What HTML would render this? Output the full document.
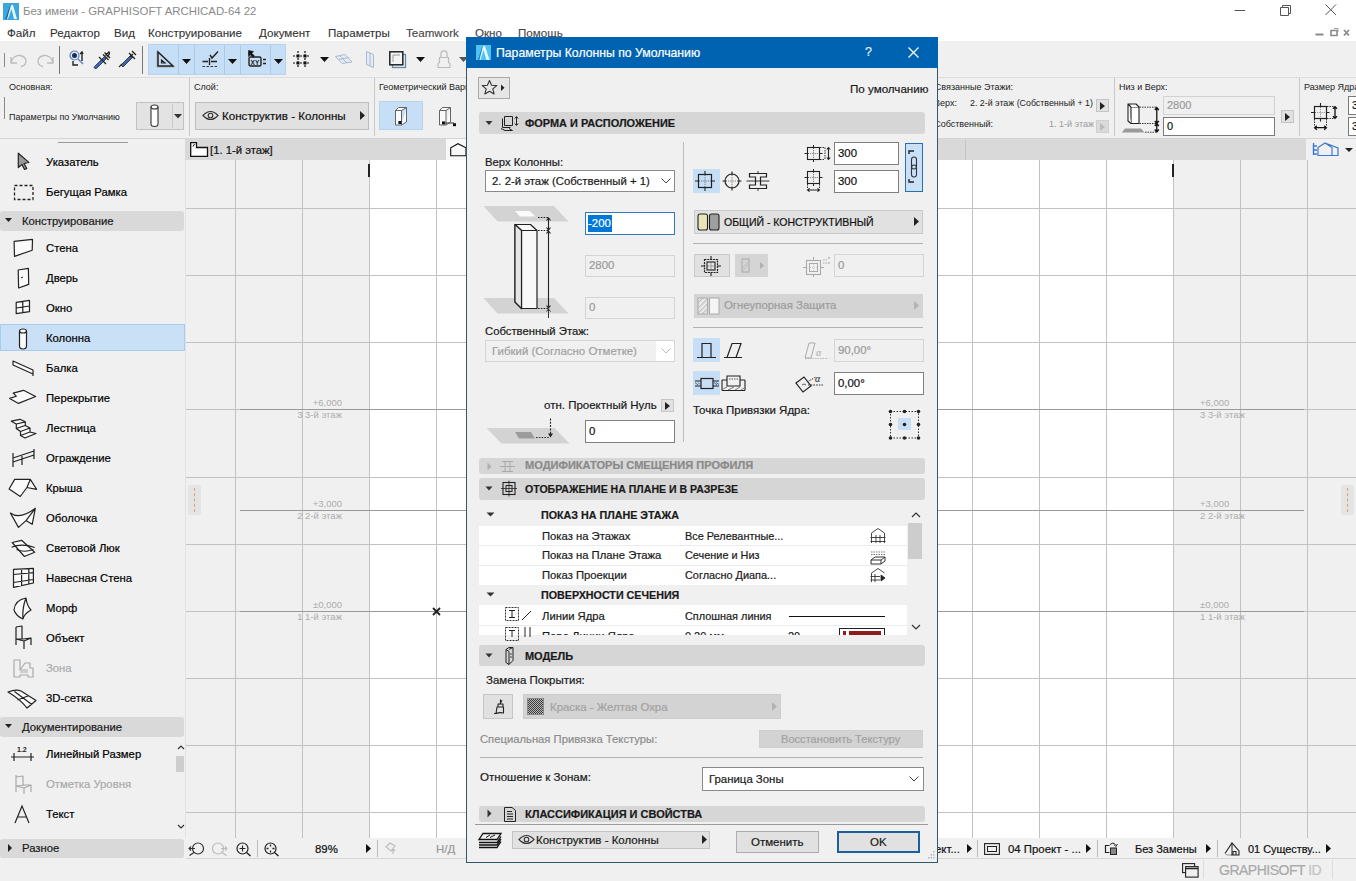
<!DOCTYPE html>
<html><head><meta charset="utf-8">
<style>
*{box-sizing:border-box;margin:0;padding:0}
html,body{width:1356px;height:881px;overflow:hidden;background:#f0f0f0;font-family:"Liberation Sans",sans-serif;color:#000;position:relative}
.a{position:absolute}
.t{position:absolute;white-space:nowrap;line-height:1;-webkit-text-stroke:0.2px currentColor}
svg{position:absolute;overflow:visible}
.ib{font-size:9px;color:#222;-webkit-text-stroke:0}
.tb{font-size:11.3px;color:#1a1a1a}
.dl{font-size:11.4px;color:#1a1a1a}
.hd{font-weight:bold;font-size:10.9px;color:#1a1a1a}
</style></head><body>
<div class="a" style="left:186px;top:160px;width:1170px;height:678px;background:#fff"></div>
<div class="a" style="left:186px;top:160px;width:183px;height:678px;background:#f0f0f0"></div>
<div class="a" style="left:1173px;top:160px;width:183px;height:678px;background:#f0f0f0"></div>
<div class="a" style="left:235px;top:160px;width:1px;height:678px;background:#c2c2c2"></div>
<div class="a" style="left:302px;top:160px;width:1px;height:678px;background:#c2c2c2"></div>
<div class="a" style="left:369px;top:160px;width:1px;height:678px;background:#c2c2c2"></div>
<div class="a" style="left:436px;top:160px;width:1px;height:678px;background:#c2c2c2"></div>
<div class="a" style="left:503px;top:160px;width:1px;height:678px;background:#c2c2c2"></div>
<div class="a" style="left:570px;top:160px;width:1px;height:678px;background:#c2c2c2"></div>
<div class="a" style="left:637px;top:160px;width:1px;height:678px;background:#c2c2c2"></div>
<div class="a" style="left:704px;top:160px;width:1px;height:678px;background:#c2c2c2"></div>
<div class="a" style="left:771px;top:160px;width:1px;height:678px;background:#c2c2c2"></div>
<div class="a" style="left:838px;top:160px;width:1px;height:678px;background:#c2c2c2"></div>
<div class="a" style="left:905px;top:160px;width:1px;height:678px;background:#c2c2c2"></div>
<div class="a" style="left:972px;top:160px;width:1px;height:678px;background:#c2c2c2"></div>
<div class="a" style="left:1039px;top:160px;width:1px;height:678px;background:#c2c2c2"></div>
<div class="a" style="left:1106px;top:160px;width:1px;height:678px;background:#c2c2c2"></div>
<div class="a" style="left:1173px;top:160px;width:1px;height:678px;background:#c2c2c2"></div>
<div class="a" style="left:1240px;top:160px;width:1px;height:678px;background:#c2c2c2"></div>
<div class="a" style="left:1307px;top:160px;width:1px;height:678px;background:#c2c2c2"></div>
<div class="a" style="left:186px;top:208px;width:1170px;height:1px;background:#c2c2c2"></div>
<div class="a" style="left:186px;top:275px;width:1170px;height:1px;background:#c2c2c2"></div>
<div class="a" style="left:186px;top:342px;width:1170px;height:1px;background:#c2c2c2"></div>
<div class="a" style="left:186px;top:409px;width:1170px;height:1px;background:#c2c2c2"></div>
<div class="a" style="left:186px;top:477px;width:1170px;height:1px;background:#c2c2c2"></div>
<div class="a" style="left:186px;top:544px;width:1170px;height:1px;background:#c2c2c2"></div>
<div class="a" style="left:186px;top:611px;width:1170px;height:1px;background:#c2c2c2"></div>
<div class="a" style="left:186px;top:678px;width:1170px;height:1px;background:#c2c2c2"></div>
<div class="a" style="left:186px;top:745px;width:1170px;height:1px;background:#c2c2c2"></div>
<div class="a" style="left:186px;top:812px;width:1170px;height:1px;background:#c2c2c2"></div>
<div class="a" style="left:240px;top:409px;width:1064px;height:1px;background:#9a9a9a"></div>
<div class="t" style="right:1014px;top:398px;font-size:9.5px;color:#acacac;-webkit-text-stroke:0">+6,000</div>
<div class="t" style="right:1014px;top:410px;font-size:9.5px;color:#acacac;-webkit-text-stroke:0">3 3-й этаж</div>
<div class="t" style="left:1200px;top:398px;font-size:9.5px;color:#acacac;-webkit-text-stroke:0">+6,000</div>
<div class="t" style="left:1200px;top:410px;font-size:9.5px;color:#acacac;-webkit-text-stroke:0">3 3-й этаж</div>
<div class="a" style="left:240px;top:510px;width:1064px;height:1px;background:#9a9a9a"></div>
<div class="t" style="right:1014px;top:499px;font-size:9.5px;color:#acacac;-webkit-text-stroke:0">+3,000</div>
<div class="t" style="right:1014px;top:511px;font-size:9.5px;color:#acacac;-webkit-text-stroke:0">2 2-й этаж</div>
<div class="t" style="left:1200px;top:499px;font-size:9.5px;color:#acacac;-webkit-text-stroke:0">+3,000</div>
<div class="t" style="left:1200px;top:511px;font-size:9.5px;color:#acacac;-webkit-text-stroke:0">2 2-й этаж</div>
<div class="a" style="left:240px;top:611px;width:1064px;height:1px;background:#9a9a9a"></div>
<div class="t" style="right:1014px;top:600px;font-size:9.5px;color:#acacac;-webkit-text-stroke:0">±0,000</div>
<div class="t" style="right:1014px;top:612px;font-size:9.5px;color:#acacac;-webkit-text-stroke:0">1 1-й этаж</div>
<div class="t" style="left:1200px;top:600px;font-size:9.5px;color:#acacac;-webkit-text-stroke:0">±0,000</div>
<div class="t" style="left:1200px;top:612px;font-size:9.5px;color:#acacac;-webkit-text-stroke:0">1 1-й этаж</div>
<div class="a" style="left:368px;top:164px;width:2px;height:13px;background:#222"></div>
<div class="a" style="left:1172px;top:164px;width:2px;height:13px;background:#222"></div>
<svg style="left:432px;top:607px" width="9" height="9"><path d="M1 1L8 8M8 1L1 8" stroke="#222" stroke-width="1.8"/></svg>
<div class="a" style="left:188px;top:485px;width:13px;height:30px;background:#e4e4e4;border-radius:2px"></div>
<div class="a" style="left:194px;top:488px;width:0;height:24px;border-left:1px dashed #d9a070"></div>
<div class="a" style="left:1341px;top:485px;width:13px;height:30px;background:#e4e4e4;border-radius:2px"></div>
<div class="a" style="left:1347px;top:488px;width:0;height:24px;border-left:1px dashed #d9a070"></div>
<div class="a" style="left:0;top:139px;width:186px;height:720px;background:#f0f0f0"></div>
<div class="a" style="left:58px;top:142px;width:70px;height:1px;background:#9a9a9a"></div>
<div class="a" style="left:185px;top:139px;width:1px;height:699px;background:#e2e2e2"></div>
<div class="t tb" style="left:46px;top:157px;color:#000">Указатель</div>
<div class="t tb" style="left:46px;top:187px;color:#000">Бегущая Рамка</div>
<div class="a" style="left:0;top:211.0px;width:184px;height:19.5px;background:#d9d9d9;border-radius:3px"></div>
<div class="t tb" style="left:22px;top:215.5px">Конструирование</div>
<div class="t tb" style="left:46px;top:243px;color:#000">Стена</div>
<div class="t tb" style="left:46px;top:273px;color:#000">Дверь</div>
<div class="t tb" style="left:46px;top:303px;color:#000">Окно</div>
<div class="a" style="left:0;top:324px;width:185px;height:27px;background:#c9e0f7;border:1px solid #a6cdee"></div>
<div class="t tb" style="left:46px;top:333px;color:#000">Колонна</div>
<div class="t tb" style="left:46px;top:363px;color:#000">Балка</div>
<div class="t tb" style="left:46px;top:393px;color:#000">Перекрытие</div>
<div class="t tb" style="left:46px;top:423px;color:#000">Лестница</div>
<div class="t tb" style="left:46px;top:453px;color:#000">Ограждение</div>
<div class="t tb" style="left:46px;top:483px;color:#000">Крыша</div>
<div class="t tb" style="left:46px;top:513px;color:#000">Оболочка</div>
<div class="t tb" style="left:46px;top:543px;color:#000">Световой Люк</div>
<div class="t tb" style="left:46px;top:573px;color:#000">Навесная Стена</div>
<div class="t tb" style="left:46px;top:603px;color:#000">Морф</div>
<div class="t tb" style="left:46px;top:633px;color:#000">Объект</div>
<div class="t tb" style="left:46px;top:663px;color:#aaa">Зона</div>
<div class="t tb" style="left:46px;top:693px;color:#000">3D-сетка</div>
<div class="a" style="left:0;top:717.0px;width:184px;height:19.5px;background:#d9d9d9;border-radius:3px"></div>
<div class="t tb" style="left:22px;top:721.5px">Документирование</div>
<div class="t tb" style="left:46px;top:749px;color:#000">Линейный Размер</div>
<div class="t tb" style="left:46px;top:779px;color:#aaa">Отметка Уровня</div>
<div class="t tb" style="left:46px;top:809px;color:#000">Текст</div>
<div class="a" style="left:0;top:838.5px;width:184px;height:19.5px;background:#d9d9d9;border-radius:3px"></div>
<div class="t tb" style="left:22px;top:843px">Разное</div>
<div class="a" style="left:176px;top:756px;width:8px;height:16px;background:#cdcdcd"></div>
<svg style="left:0;top:0" width="186" height="881">
<path d="M18.3 153.2L28.9 162.4L24 163.5L26.8 168.5L24.5 169.5L22 164.5L18.3 167.5Z" fill="#999" stroke="#222" stroke-width="1.2" stroke-linejoin="round"/>
<rect x="14.5" y="185.5" width="18.5" height="14" fill="none" stroke="#222" stroke-width="1.3" stroke-dasharray="3 2"/>
<path d="M5 218.0H12L8.5 222.0Z" fill="#222"/>
<path d="M14.1 241.4L32.5 239.4L32.2 250.3L14.5 256.4Z" fill="#fafafa" stroke="#222" stroke-width="1.2" fill="none" stroke-linejoin="round"/>
<path d="M18.2 270L28.4 268.4L28.7 284.4L18.6 288Z" fill="#fafafa" stroke="#222" stroke-width="1.2" fill="none" stroke-linejoin="round"/><path d="M21 278L23 277" stroke="#222"/>
<path d="M16.2 302.4L29.5 300.4L29.5 311.7L16.2 313.7Z M22.8 301.4V312.7 M16.2 308L29.5 306" fill="#fafafa" stroke="#222" stroke-width="1.2" fill="none" stroke-linejoin="round"/>
<path d="M19.5 331V346Q19.5 349 23 349Q26.5 349 26.5 346V331" fill="#fafafa" stroke="#222" stroke-width="1.2" fill="none" stroke-linejoin="round"/><ellipse cx="23" cy="331" rx="3.5" ry="2" fill="#fafafa" stroke="#222" stroke-width="1.2" fill="none" stroke-linejoin="round"/>
<path d="M13 361L33 370L33 374L13 365Z M13 361V365 M33 370V376" fill="#fafafa" stroke="#222" stroke-width="1.2" fill="none" stroke-linejoin="round"/>
<path d="M9.7 398.4L16.3 396.2L13.2 393.1L23.5 390.3L35.6 396.5L18.5 403.4Z" fill="#fafafa" stroke="#222" stroke-width="1.2" fill="none" stroke-linejoin="round"/>
<path d="M11.3 421.2L20 419.3L25.3 421.8L16.3 424Z M16.3 424V428.5L25.3 425.5V421.8 M16.3 428.5L20.5 431.5L30 428L25.3 425.5 M20.5 431.5V435.5L30 432V428 M20.5 435.5L25 438L36 433.5L30 432" fill="#fafafa" stroke="#222" stroke-width="1.2" fill="none" stroke-linejoin="round"/>
<path d="M13 467V453 M13 458L34 451 M13 462L34 455 M22 465V456 M34 459V449" stroke="#222" stroke-width="1.2" fill="none" stroke-linejoin="round"/>
<path d="M9.1 489L14.7 479.4H30.3L36.6 489.3L26.9 487.5L20.3 496.5Z M30.3 479.4L26.9 487.5" fill="#fafafa" stroke="#222" stroke-width="1.2" fill="none" stroke-linejoin="round"/>
<path d="M10.4 513Q20 520 35.3 508.3L32.2 524.3L26 520.6L18.5 527.4Z M35.3 508.3L26 520.6" fill="#fafafa" stroke="#222" stroke-width="1.2" fill="none" stroke-linejoin="round"/>
<path d="M12.2 542.5L21.6 540.3L34.7 552.2L24.4 556.5Z" fill="#fafafa" stroke="#222" stroke-width="1.2" fill="none" stroke-linejoin="round"/><path d="M11.6 547.2Q22 543 34.7 547.5 M16.5 549.5Q24 553 33.5 549.5" fill="none" stroke="#222" stroke-width="1.2" fill="none" stroke-linejoin="round"/>
<path d="M13.5 569.3L33.4 568.4V583L13.5 587.4Z M13.5 574.5L33.4 572.6 M13.5 582.5L33.4 579.5 M21.6 569V586 M28.8 568.6V584.2" fill="#fafafa" stroke="#222" stroke-width="1.2" fill="none" stroke-linejoin="round"/>
<path d="M14 610Q15 600 26 598Q27 606 31 610Q24 614 23 619Q16 616 14 610Z M26 598Q22 608 23 619" fill="#fafafa" stroke="#222" stroke-width="1.2" fill="none" stroke-linejoin="round"/>
<path d="M16 627V645 M16 627L22 626V639 M16 639L23 639L31 638L24 641Z M24 641V649 M31 638V645" fill="none" stroke="#222" stroke-width="1.2" fill="none" stroke-linejoin="round"/>
<path d="M14 660H20V670L25 663H30V668H33V677H28V675H20V677H14Z M20 670H28M20 672H28" stroke="#aaa" stroke-width="1.2" fill="none" stroke-linejoin="round"/>
<path d="M8 692Q16 689 21 691L36 700.5L27 708Q20 699 8 692Z M14.5 691.5L31.5 704.3 M28.5 695.7L17.5 700" fill="#fafafa" stroke="#222" stroke-width="1.2" fill="none" stroke-linejoin="round"/>
<path d="M5 724.0H12L8.5 728.0Z" fill="#222"/>
<path d="M11 757H34 M14 753V761 M31 753V761" stroke="#222" stroke-width="1.2"/><text x="17" y="752" font-size="7" font-weight="bold" font-family="Liberation Sans" fill="#222">1.2</text>
<path d="M16 775V792 M16 777L23 776V786 M16 786L25 785L31 785L24 788Z M24 788V794 M31 785V792" fill="none" stroke="#aaa" stroke-width="1.2" fill="none" stroke-linejoin="round"/>
<path d="M15 823L22 806L29 823 M18 817H26" stroke="#222" stroke-width="1.2" fill="none"/>
<path d="M8 844V852L12 848Z" fill="#222"/>
<path d="M178 749L181 746L184 749" stroke="#333" stroke-width="1.2" fill="none"/>
<path d="M178 825L181 828L184 825" stroke="#333" stroke-width="1.2" fill="none"/>
</svg>
<!-- title + menu -->
<div class="a" style="left:0;top:0;width:1356px;height:41px;background:#fff"></div>
<svg style="left:3px;top:3px" width="16" height="17"><rect x="0" y="0" width="16" height="17" fill="#3aa7dd"/><path d="M2 16 L7 2 L10 2 L14 16 L11 16 L8.5 6 L5 16Z" fill="#e6f6ff"/><path d="M2 16 L7 2 L8 2 L4 16Z" fill="#0e6aa8"/></svg>
<div class="t" style="left:23px;top:6px;font-size:11.4px;color:#8a8a8a;-webkit-text-stroke:0">Без имени - GRAPHISOFT ARCHICAD-64 22</div>
<svg style="left:1234px;top:4px" width="12" height="12"><path d="M0.5 6.5H11" stroke="#555" stroke-width="1"/></svg>
<svg style="left:1280px;top:4px" width="12" height="12"><path d="M0.5 3.5H8.5V11.5H0.5Z M2.5 3.5V1.5H10.5V9.5H8.5" stroke="#555" stroke-width="1" fill="none"/></svg>
<svg style="left:1325px;top:4px" width="12" height="12"><path d="M0.5 0.5L11 11M11 0.5L0.5 11" stroke="#555" stroke-width="1"/></svg>
<div class="t" style="left:7px;top:27px;font-size:11.6px;color:#333;-webkit-text-stroke:0.1px #333">Файл</div>
<div class="t" style="left:50px;top:27px;font-size:11.6px;color:#333;-webkit-text-stroke:0.1px #333">Редактор</div>
<div class="t" style="left:114px;top:27px;font-size:11.6px;color:#333;-webkit-text-stroke:0.1px #333">Вид</div>
<div class="t" style="left:148px;top:27px;font-size:11.6px;color:#333;-webkit-text-stroke:0.1px #333">Конструирование</div>
<div class="t" style="left:259px;top:27px;font-size:11.6px;color:#333;-webkit-text-stroke:0.1px #333">Документ</div>
<div class="t" style="left:328px;top:27px;font-size:11.6px;color:#333;-webkit-text-stroke:0.1px #333">Параметры</div>
<div class="t" style="left:406px;top:27px;font-size:11.6px;color:#444;-webkit-text-stroke:0.1px #444">Teamwork</div>
<div class="t" style="left:475px;top:27px;font-size:11.6px;color:#444;-webkit-text-stroke:0.1px #444">Окно</div>
<div class="t" style="left:518px;top:27px;font-size:11.6px;color:#444;-webkit-text-stroke:0.1px #444">Помощь</div>
<svg style="left:1312px;top:27px" width="42" height="12"><path d="M3.5 7.5H11.5" stroke="#8a8a8a" stroke-width="2"/><path d="M19 3.5H25V8.5H19Z" stroke="#8a8a8a" stroke-width="1.6" fill="none"/><path d="M22 1.5H26V5" stroke="#8a8a8a" stroke-width="0.8" fill="none"/><path d="M32 3L37 8.5M37 3L32 8.5" stroke="#8a8a8a" stroke-width="1.8"/></svg>

<!-- toolbar -->
<div class="a" style="left:0;top:41px;width:1356px;height:36px;background:#f0f0f0"></div>
<div class="a" style="left:4px;top:53px;width:1px;height:14px;background:#888"></div>
<svg style="left:10px;top:54px" width="44" height="13"><path d="M1 8 Q4 1 10 1.5 Q16 2.5 16 7.5 Q15.5 12 11 12.5" stroke="#bbb" stroke-width="1.3" fill="none"/><path d="M1 3V9H7" stroke="#bbb" stroke-width="1.3" fill="none"/><path d="M43 8 Q40 1 34 1.5 Q28 2.5 28 7.5 Q28.5 12 33 12.5" stroke="#bbb" stroke-width="1.3" fill="none"/><path d="M43 3V9H37" stroke="#bbb" stroke-width="1.3" fill="none"/></svg>
<div class="a" style="left:59px;top:46px;width:1px;height:28px;background:#777"></div>
<svg style="left:69px;top:50px" width="18" height="18"><circle cx="5.5" cy="5.5" r="4.5" fill="#dbe8f5" stroke="#5b7fbf" stroke-width="1.2"/><circle cx="5.5" cy="5.5" r="2.5" fill="#1e2d4a"/><path d="M9 9L14 14" stroke="#5b7fbf" stroke-width="1.3"/><path d="M13 11V3 M11 4L13 2L14 4" stroke="#222" stroke-width="1.4" fill="none"/><path d="M4 11V15H9" stroke="#222" stroke-width="1.4" fill="none"/></svg>
<svg style="left:92px;top:50px" width="20" height="19"><path d="M2.5 16.5L12 7L14 9L4.5 18.5Q2.5 19 2 17.5Z" fill="#4366b4" stroke="#1e2f55" stroke-width="0.8"/><path d="M11 4.5L16.5 10 M12.5 2.5L18 8 M13.5 5.5L17 2Q18.5 3.5 15 7" stroke="#222" stroke-width="1.3" fill="none"/><path d="M7 7L14 14" stroke="#222" stroke-width="1.2"/></svg>
<svg style="left:118px;top:50px" width="18" height="18"><path d="M1 17 L4 14" stroke="#333" stroke-width="1.2"/><path d="M3 15 L13 5 L15 7 L5 17Z" fill="#4065b0" stroke="#222" stroke-width="0.8"/><path d="M11 3L17 9 M14 1L18 5 M12 7L15 4" stroke="#222" stroke-width="1.3"/></svg>
<div class="a" style="left:142px;top:46px;width:1px;height:28px;background:#777"></div>
<div class="a" style="left:148px;top:44px;width:138px;height:31px;background:#c6dff6;border:1px solid #b3d3f0"></div>
<div class="a" style="left:178px;top:45px;width:1px;height:29px;background:#a9cbe9"></div>
<div class="a" style="left:194px;top:45px;width:1px;height:29px;background:#a9cbe9"></div>
<div class="a" style="left:224px;top:45px;width:1px;height:29px;background:#a9cbe9"></div>
<div class="a" style="left:240px;top:45px;width:1px;height:29px;background:#a9cbe9"></div>
<div class="a" style="left:270px;top:45px;width:1px;height:29px;background:#a9cbe9"></div>
<svg style="left:155px;top:50px" width="20" height="20"><path d="M2 1V17H19" stroke="#999" stroke-width="0.8" fill="none"/><path d="M3 2V16H18Z" stroke="#222" stroke-width="1.5" fill="none" stroke-linejoin="miter"/><path d="M6.5 10V13H10Z" stroke="#222" stroke-width="1.2" fill="none"/></svg>
<svg style="left:182px;top:59px" width="9" height="5"><path d="M0 0H9L4.5 5Z" fill="#111"/></svg>
<svg style="left:202px;top:50px" width="18" height="18"><path d="M0.5 11.5H6 M9 11.5H15" stroke="#222" stroke-width="1.4"/><path d="M7.5 8V15" stroke="#222" stroke-width="1.4"/><path d="M8 5L10 8L16 1.5" stroke="#222" stroke-width="1.4" fill="none"/><path d="M0.5 16.5H16" stroke="#333" stroke-width="1" stroke-dasharray="2.5 1.5"/></svg>
<svg style="left:228px;top:59px" width="9" height="5"><path d="M0 0H9L4.5 5Z" fill="#111"/></svg>
<svg style="left:248px;top:50px" width="19" height="18"><path d="M0.5 0.5V6.5L2.3 4.8L5 7.5L6.5 6L3.8 3.3L5.5 1.5Z" fill="#111" stroke="#111" stroke-width="0.6" stroke-linejoin="round"/><rect x="1" y="7" width="12" height="9" rx="1.5" fill="none" stroke="#222" stroke-width="1.4"/><text x="2.6" y="14.5" font-size="6.5" font-weight="bold" font-family="Liberation Sans" fill="#222">XY</text><path d="M15 9.5H18M15 13.5H18" stroke="#222" stroke-width="1.3"/></svg>
<svg style="left:274px;top:59px" width="9" height="5"><path d="M0 0H9L4.5 5Z" fill="#111"/></svg>
<svg style="left:293px;top:51px" width="18" height="18"><path d="M0 5H17M0 12H17M5 0V17M12 0V17" stroke="#111" stroke-width="1.2" stroke-dasharray="2 1.5"/><rect x="3.5" y="3.5" width="3" height="3" fill="#111"/><rect x="10.5" y="3.5" width="3" height="3" fill="#111"/><rect x="3.5" y="10.5" width="3" height="3" fill="#111"/><rect x="10.5" y="10.5" width="3" height="3" fill="#111"/></svg>
<svg style="left:320px;top:57px" width="9" height="5"><path d="M0 0H9L4.5 5Z" fill="#111"/></svg>
<svg style="left:335px;top:54px" width="18" height="10"><path d="M0.5 2.5L10 0.5L17 8L7 9.5Z M4 5.5L13.5 3.5M5 2L12 9" stroke="#a8b8d0" stroke-width="1" fill="#e6ebf2"/></svg>
<svg style="left:366px;top:51px" width="8" height="17"><path d="M0.5 0.5L7.5 3.5V16.5L0.5 13.5Z M4 2V15" stroke="#a8b8d0" stroke-width="1" fill="#e6ebf2"/></svg>
<svg style="left:389px;top:51px" width="18" height="18"><rect x="3.5" y="3.5" width="13" height="13" fill="none" stroke="#6688aa" stroke-width="1.3"/><rect x="0.8" y="0.8" width="13" height="13" fill="#f3f3f3" stroke="#222" stroke-width="1.5"/><path d="M4 11V4H11" stroke="#999" fill="none"/></svg>
<svg style="left:416px;top:57px" width="9" height="5"><path d="M0 0H9L4.5 5Z" fill="#111"/></svg>
<svg style="left:437px;top:50px" width="14" height="18"><path d="M4 7V3.5Q4 0.8 7 0.8Q10 0.8 10 3.5V7 M2.5 7.5H11.5V12.5L13 13.5V17.5H1V13.5L2.5 12.5Z" fill="none" stroke="#bbb" stroke-width="1.2"/></svg>
<svg style="left:459px;top:57px" width="9" height="5"><path d="M0 0H9L4.5 5Z" fill="#555"/></svg>

<!-- info box -->
<div class="a" style="left:0;top:77px;width:1356px;height:1px;background:#dedede"></div>
<div class="a" style="left:0;top:138px;width:1356px;height:1px;background:#d4d4d4"></div>
<div class="t ib" style="left:9px;top:83px">Основная:</div>
<div class="a" style="left:4px;top:97px;width:1px;height:22px;background:#888"></div>
<div class="t ib" style="left:9px;top:113px">Параметры по Умолчанию</div>
<div class="a" style="left:136px;top:102px;width:48px;height:28px;background:#e3e3e3;border:1px solid #c2c2c2"></div>
<div class="a" style="left:172px;top:104px;width:1px;height:24px;background:#c9c9c9"></div>
<svg style="left:150px;top:104px" width="10" height="24"><path d="M1 3V20Q1 22.5 4.5 22.5Q8 22.5 8 20V3" fill="#fff" stroke="#333" stroke-width="1.1"/><ellipse cx="4.5" cy="3" rx="3.5" ry="2" fill="#fff" stroke="#333" stroke-width="1.1"/></svg>
<svg style="left:174px;top:114px" width="8" height="5"><path d="M0 0H8L4 4.5Z" fill="#333"/></svg>
<div class="a" style="left:189px;top:78px;width:1px;height:58px;background:#c8c8c8"></div>
<div class="t ib" style="left:194px;top:83px">Слой:</div>
<div class="a" style="left:195px;top:102px;width:174px;height:28px;background:#e1e1e1;border:1px solid #bdbdbd"></div>
<svg style="left:202px;top:110px" width="17" height="11"><path d="M1 5.5Q8.5 -2.5 16 5.5Q8.5 13.5 1 5.5Z" fill="none" stroke="#333" stroke-width="1.1"/><circle cx="8.5" cy="5.5" r="2.3" fill="none" stroke="#333" stroke-width="1.1"/></svg>
<div class="t" style="left:222px;top:110px;font-size:11.6px;color:#111">Конструктив - Колонны</div>
<svg style="left:360px;top:111px" width="5" height="9"><path d="M0 0V9L5 4.5Z" fill="#222"/></svg>
<div class="a" style="left:374px;top:78px;width:1px;height:58px;background:#c8c8c8"></div>
<div class="t ib" style="left:379px;top:83px">Геометрический Вариант</div>
<div class="a" style="left:379px;top:101px;width:44px;height:29px;background:#c6dff6;border:1px solid #b4d4f0"></div>
<svg style="left:393px;top:104px" width="16" height="24"><path d="M2.5 6.5H8.5V21H2.5Z M2.5 6.5L5.5 3.5H13.5L8.5 6.5 M13.5 3.5V18L8.5 21" fill="#fafafa" stroke="#555" stroke-width="0.9" stroke-linejoin="round"/><rect x="5.4" y="17" width="3" height="3" fill="#111"/></svg>
<svg style="left:437px;top:104px" width="22" height="24"><path d="M2.5 6.5H9V21H2.5Z M2.5 6.5L5.5 3.5H13.5L9 6.5 M13.5 3.5V18L9 21" fill="#fafafa" stroke="#555" stroke-width="0.9" stroke-linejoin="round"/><rect x="5" y="17.4" width="3" height="3" fill="#111"/><path d="M7.5 19H17" stroke="#333" stroke-width="1"/><rect x="16" y="19.2" width="3" height="3" fill="#111"/></svg>
<!-- right side of info box -->
<div class="t ib" style="right:343px;top:83px">Связанные Этажи:</div>
<div class="t ib" style="right:399px;top:99px">Верх:</div>
<div class="t ib" style="left:970px;top:99px;font-size:8.85px">2. 2-й этаж (Собственный + 1)</div>
<div class="a" style="left:1096px;top:99px;width:13px;height:13px;background:#e1e1e1;border:1px solid #c4c4c4"></div>
<svg style="left:1100px;top:102px" width="5" height="8"><path d="M0 0V8L5 4Z" fill="#222"/></svg>
<div class="t ib" style="right:363px;top:120px">Собственный:</div>
<div class="t ib" style="left:1049px;top:120px;color:#9a9a9a">1. 1-й этаж</div>
<div class="a" style="left:1096px;top:120px;width:13px;height:13px;background:#dadada;border:1px solid #d0d0d0"></div>
<svg style="left:1100px;top:123px" width="5" height="8"><path d="M0 0V8L5 4Z" fill="#bbb"/></svg>
<div class="a" style="left:1114px;top:78px;width:1px;height:58px;background:#c8c8c8"></div>
<div class="t ib" style="left:1119px;top:83px">Низ и Верх:</div>
<svg style="left:1120px;top:102px" width="40" height="33"><path d="M1.8 30.6L5 26.6H21L24.5 30.6Z" fill="#9a9a9a"/><path d="M11 5H19V21.5H11Z" fill="#fff" stroke="#222" stroke-width="1.1"/><path d="M11 5L8 2H16L19 5 M8 2V19L11 21.5" fill="#fff" stroke="#222" stroke-width="1.1" stroke-linejoin="round"/><path d="M19.5 5.2H36M19.5 21.5H36M25 30.2H36" stroke="#333" stroke-width="1" stroke-dasharray="1.5 1"/><path d="M36.8 5.5V30 M34.8 8L36.8 5.5L38.8 8 M34.8 19L36.8 21.5L38.8 19 M34.8 24L36.8 21.5L38.8 24 M34.8 27.5L36.8 30L38.8 27.5" stroke="#111" stroke-width="1.3" fill="none"/></svg>
<div class="a" style="left:1163px;top:96px;width:112px;height:19px;background:#f0f0f0;border:1px solid #d2d2d2"></div>
<div class="t" style="left:1167px;top:100px;font-size:11px;color:#9a9a9a">2800</div>
<div class="a" style="left:1163px;top:117px;width:112px;height:19px;background:#fff;border:1px solid #7a7a7a"></div>
<div class="t" style="left:1167px;top:121px;font-size:11px;color:#111">0</div>
<div class="a" style="left:1281px;top:110px;width:13px;height:13px;background:#e1e1e1;border:1px solid #c4c4c4"></div>
<svg style="left:1285px;top:113px" width="5" height="8"><path d="M0 0V8L5 4Z" fill="#222"/></svg>
<div class="a" style="left:1299px;top:78px;width:1px;height:58px;background:#c8c8c8"></div>
<div class="t ib" style="left:1304px;top:83px">Размер Ядра</div>
<svg style="left:1310px;top:102px" width="30" height="30"><rect x="4.5" y="4.5" width="12" height="12" fill="none" stroke="#222" stroke-width="1.2"/><path d="M1 10.5H4.5M16.5 10.5H19.5M10.5 1V4.5M10.5 16.5V19.5" stroke="#222" stroke-width="1.1"/><path d="M5 10.5H16M10.5 5V16" stroke="#555" stroke-width="0.7" stroke-dasharray="1 1.2"/><path d="M17 4.5H24M17 16.5H24M4.5 17V24M16.5 17V24" stroke="#333" stroke-width="1" stroke-dasharray="1.5 1"/><path d="M25 4.8V16.2 M23 6.8L25 4.6L27 6.8M23 14.2L25 16.4L27 14.2" stroke="#111" stroke-width="1.3" fill="none"/><path d="M4.8 25.7H16.2 M6.8 23.7L4.6 25.7L6.8 27.7M14.2 23.7L16.4 25.7L14.2 27.7" stroke="#111" stroke-width="1.3" fill="none"/></svg>
<div class="a" style="left:1348px;top:96px;width:20px;height:19px;background:#fff;border:1px solid #7a7a7a"></div>
<div class="a" style="left:1348px;top:117px;width:20px;height:19px;background:#fff;border:1px solid #7a7a7a"></div>
<div class="t" style="left:1352px;top:100px;font-size:11px;color:#111">3</div>
<div class="t" style="left:1352px;top:121px;font-size:11px;color:#111">3</div>

<!-- tab bar -->
<div class="a" style="left:186px;top:139px;width:1170px;height:21px;background:#f0f0f0"></div>
<div class="a" style="left:185px;top:139px;width:261px;height:21px;background:#d9d9d9"></div>
<svg style="left:190px;top:142px" width="19" height="15"><path d="M0.7 0.7H6.5V5.5H17.5V14.3H0.7Z" fill="#fff" stroke="#111" stroke-width="1.3"/><path d="M3 4.5L4.5 2" stroke="#111" stroke-width="1"/></svg>
<div class="t" style="left:210px;top:145px;font-size:11.3px;color:#111">[1. 1-й этаж]</div>
<div class="a" style="left:446px;top:139px;width:20px;height:21px;background:#f8f8f8"></div><svg style="left:450px;top:143px" width="20" height="14"><path d="M0.7 12.7V4.8L8 0.7L16 4.8V12.7Z" fill="none" stroke="#111" stroke-width="1.1"/></svg>
<div class="a" style="left:938px;top:139px;width:368px;height:21px;background:#d9d9d9"></div>
<div class="a" style="left:965px;top:140px;width:1px;height:20px;background:#c4c4c4"></div>
<svg style="left:1312px;top:142px" width="40" height="15"><path d="M1.5 1V13 M1.5 4H5M1.5 8H5M1.5 12H5" stroke="#3b78d0" stroke-width="1.4"/><path d="M6 13.5V5.5L13 1L20 5.5V13.5Z M13 1L26 6V13.5H20" fill="none" stroke="#3b78d0" stroke-width="1.2"/><path d="M33 6H41L37 10Z" fill="#222"/></svg>

<!-- status bar -->
<div class="a" style="left:186px;top:838px;width:1170px;height:21px;background:#f0f0f0;border-bottom:1px solid #d6d6d6"></div>
<svg style="left:188px;top:842px" width="18" height="14"><circle cx="10" cy="6.5" r="5.5" fill="none" stroke="#333" stroke-width="1.2"/><path d="M6 10.5L1.5 13.5" stroke="#333" stroke-width="1.3"/><path d="M1 6.5H7M3 4.5L1 6.5L3 8.5" stroke="#333" stroke-width="1.1" fill="none"/></svg>
<svg style="left:211px;top:842px" width="18" height="14"><circle cx="7" cy="6.5" r="5.5" fill="none" stroke="#bbb" stroke-width="1.2"/><path d="M11 10.5L15.5 13.5" stroke="#bbb" stroke-width="1.3"/><path d="M10 6.5H16M14 4.5L16 6.5L14 8.5" stroke="#bbb" stroke-width="1.1" fill="none"/></svg>
<svg style="left:236px;top:842px" width="17" height="15"><circle cx="6.5" cy="6.5" r="5.5" fill="none" stroke="#222" stroke-width="1.2"/><path d="M10.5 10.5L14.5 14" stroke="#222" stroke-width="1.4"/><path d="M3.5 6.5H9.5M6.5 3.5V9.5" stroke="#222" stroke-width="1.1"/></svg>
<div class="a" style="left:257px;top:840px;width:1px;height:17px;background:#bdbdbd"></div>
<svg style="left:264px;top:842px" width="17" height="15"><circle cx="6.5" cy="6.5" r="5.5" fill="none" stroke="#222" stroke-width="1.2"/><path d="M10.5 10.5L14.5 14" stroke="#222" stroke-width="1.4"/><path d="M6.5 2.5V4.5M6.5 8.5V10.5M2.5 6.5H4.5M8.5 6.5H10.5" stroke="#222" stroke-width="1.3"/></svg>
<div class="t" style="left:315px;top:844px;font-size:11.4px;color:#111">89%</div>
<svg style="left:366px;top:844px" width="5" height="9"><path d="M0 0V9L5 4.5Z" fill="#111"/></svg>
<div class="a" style="left:377px;top:840px;width:1px;height:17px;background:#bdbdbd"></div>
<svg style="left:385px;top:842px" width="14" height="13"><path d="M1 5L5 1L10 4L6 9Z M8 12V7M6 9L8 7L10 9" stroke="#bbb" stroke-width="1.1" fill="none"/></svg>
<div class="t" style="left:436px;top:844px;font-size:11.4px;color:#999">Н/Д</div>
<div class="t" style="left:935px;top:844px;font-size:11.4px;color:#111">ект...</div>
<svg style="left:967px;top:844px" width="5" height="9"><path d="M0 0V9L5 4.5Z" fill="#111"/></svg>
<div class="a" style="left:977px;top:840px;width:1px;height:17px;background:#bdbdbd"></div>
<svg style="left:984px;top:843px" width="16" height="12"><rect x="0.6" y="0.6" width="14.8" height="10.8" fill="none" stroke="#222" stroke-width="1.1"/><rect x="3.5" y="3.5" width="9" height="5" fill="none" stroke="#222" stroke-width="1"/></svg>
<div class="t" style="left:1008px;top:844px;font-size:11.4px;color:#111">04 Проект - ...</div>
<svg style="left:1086px;top:844px" width="5" height="9"><path d="M0 0V9L5 4.5Z" fill="#111"/></svg>
<div class="a" style="left:1097px;top:840px;width:1px;height:17px;background:#bdbdbd"></div>
<svg style="left:1104px;top:841px" width="15" height="15"><path d="M5.5 4.5H1.5V11.5H5.5" stroke="#222" stroke-width="1.2" fill="none"/><rect x="6.5" y="7" width="6" height="6.5" fill="#888" stroke="#222" stroke-width="1"/><path d="M6 3.5Q9 0.5 11.5 3.5 M10 3.5L11.8 5.5L13.5 3" stroke="#222" stroke-width="1" fill="none"/></svg>
<div class="t" style="left:1135px;top:844px;font-size:11px;color:#111">Без Замены</div>
<svg style="left:1206px;top:844px" width="5" height="9"><path d="M0 0V9L5 4.5Z" fill="#111"/></svg>
<div class="a" style="left:1217px;top:840px;width:1px;height:17px;background:#bdbdbd"></div>
<svg style="left:1224px;top:842px" width="16" height="14"><path d="M1 11.5L8 1L15 9V13H7" stroke="#222" stroke-width="1.1" fill="none"/><path d="M1 11.5L3 13H7" stroke="#999" stroke-width="1" fill="none"/><path d="M9 13V9.5H12V13" stroke="#222" stroke-width="1.1" fill="none"/><path d="M8 1V13" stroke="#222" stroke-width="1"/></svg>
<div class="t" style="left:1248px;top:844px;font-size:10.9px;color:#111">01 Существу...</div>
<svg style="left:1326px;top:844px" width="5" height="9"><path d="M0 0V9L5 4.5Z" fill="#111"/></svg>
<!-- bottom bar -->
<svg style="left:1182px;top:863px" width="17" height="15"><rect x="0.6" y="0.6" width="12" height="9" fill="none" stroke="#222" stroke-width="1.1"/><rect x="3.6" y="3.6" width="12.5" height="10.5" fill="#f0f0f0" stroke="#222" stroke-width="1.1"/><path d="M3.6 5.5H16" stroke="#222" stroke-width="1.5"/></svg>
<div class="a" style="left:1203px;top:860px;width:1px;height:19px;background:#dcdcdc"></div>
<div class="t" style="left:1219px;top:863px;font-size:14px;color:#a9a9a9;letter-spacing:-0.5px">GRAPHISOFT <span style="font-weight:normal;color:#c4c4c4">ID</span></div>
<div class="a" style="left:1332px;top:860px;width:1px;height:19px;background:#dcdcdc"></div>

<!-- ===== DIALOG ===== -->
<div class="a" style="left:466px;top:37px;width:472px;height:826px;background:#f0f0f0;border:1px solid #34586b"></div>
<div class="a" style="left:466px;top:37px;width:472px;height:31px;background:#0063b1"></div>
<svg style="left:476px;top:45px" width="15" height="15"><rect x="0" y="0" width="15" height="15" fill="#4fc3ef"/><path d="M1.5 15L6 1H9L13.5 15H10.5L7.5 5L4.5 15Z" fill="#e8f8ff"/><path d="M1.5 15L6 1H7L3.5 15Z" fill="#1b8fd0"/></svg>
<div class="t" style="left:496px;top:47px;font-size:12.25px;color:#fff">Параметры Колонны по Умолчанию</div>
<div class="t" style="left:865px;top:46px;font-size:12.5px;color:#e6f0fa">?</div>
<svg style="left:908px;top:47px" width="11" height="11"><path d="M0.5 0.5L10.5 10.5M10.5 0.5L0.5 10.5" stroke="#fff" stroke-width="1.2"/></svg>
<!-- favorites -->
<div class="a" style="left:478px;top:77px;width:32px;height:22px;background:#e6e6e6;border:1px solid #a9a9a9"></div>
<svg style="left:481px;top:79px" width="26" height="18"><path d="M8.5 1.5L10.6 6.3L15.8 6.6L11.8 9.9L13.1 15L8.5 12.2L3.9 15L5.2 9.9L1.2 6.6L6.4 6.3Z" fill="none" stroke="#333" stroke-width="1.1" stroke-linejoin="round"/><path d="M20 5.5V12L23.5 8.75Z" fill="#222"/></svg>
<div class="t dl" style="left:850px;top:83px;font-size:11.6px">По умолчанию</div>
<!-- section 1 header -->
<div class="a" style="left:479px;top:112px;width:446px;height:22px;background:#d6d6d6;border-radius:3px"></div>
<svg style="left:484px;top:112px" width="40" height="22"><path d="M1.5 9H8.5L5 13Z" fill="#333"/><path d="M20.5 4.5H28.5V13.5H20.5Z M18.5 6.5V15.5H26.5 M17 16.5L21 18.5H28.5L25 16.5" fill="none" stroke="#222" stroke-width="1"/><path d="M32.5 5V13 M30.8 6.5L32.5 4.5L34.2 6.5M30.8 11.5L32.5 13.5L34.2 11.5" stroke="#222" stroke-width="1" fill="none"/></svg>
<div class="t hd" style="left:525px;top:118px;font-size:10.95px">ФОРМА И РАСПОЛОЖЕНИЕ</div>
<div class="a" style="left:683px;top:142px;width:1px;height:300px;background:#bcbcbc"></div>
<!-- left column -->
<div class="t dl" style="left:485px;top:157px;font-size:11.3px">Верх Колонны:</div>
<div class="a" style="left:485px;top:170px;width:190px;height:22px;background:#fff;border:1px solid #8a8a8a"></div>
<div class="t dl" style="left:492px;top:176px;font-size:11.36px">2. 2-й этаж (Собственный + 1)</div>
<svg style="left:661px;top:178px" width="10" height="6"><path d="M0.5 0.5L5 5L9.5 0.5" stroke="#444" stroke-width="1" fill="none"/></svg>
<svg style="left:483px;top:205px" width="90" height="115"><path d="M0.5 1H71L85.5 16.5H14.5Z" fill="#d3d3d3"/><path d="M32 6H46.5L52.5 11.5H37Z" fill="#fbfbfb"/><path d="M0.5 93H71L85.5 108.5H14.5Z" fill="#d3d3d3"/><path d="M32 19.5L47.5 19.5L54 25.5L38.5 25.5Z M32 19.5V97L38.5 103.5V25.5 M38.5 25.5H54V103.5H38.5" fill="#f8f8f8" stroke="#222" stroke-width="1.2" stroke-linejoin="round"/><path d="M32 19.5V97L38.5 103.5V25.5Z" fill="#e6e6e6" stroke="#222" stroke-width="1.2" stroke-linejoin="round"/><path d="M55 12.5H65M55 25.5H65M55 103.5H65" stroke="#222" stroke-width="1" stroke-dasharray="1.6 1.2"/><path d="M65.5 13V25 M63.5 15.5L65.5 13L67.5 15.5 M63.5 22.5L65.5 25L67.5 22.5" stroke="#222" stroke-width="1.1" fill="none"/><path d="M65.5 26V103 M63.5 28.5L65.5 26L67.5 28.5 M63.5 100.5L65.5 103L67.5 100.5" stroke="#222" stroke-width="1.1" fill="none"/><path d="M65.5 104V113 M63.5 106.5L65.5 104L67.5 106.5" stroke="#333" stroke-width="1" fill="none"/></svg>
<div class="a" style="left:585px;top:212px;width:90px;height:23px;background:#fff;border:1px solid #2f78c4"></div>
<div class="a" style="left:588px;top:215px;width:24px;height:17px;background:#0078d7"></div>
<div class="t" style="left:588px;top:218px;font-size:11.4px;color:#fff">-200</div>
<div class="a" style="left:585px;top:255px;width:90px;height:22px;background:#f0f0f0;border:1px solid #d4d4d4"></div>
<div class="t" style="left:589px;top:260px;font-size:11.4px;color:#999">2800</div>
<div class="a" style="left:585px;top:297px;width:90px;height:22px;background:#f0f0f0;border:1px solid #d4d4d4"></div>
<div class="t" style="left:589px;top:302px;font-size:11.4px;color:#999">0</div>
<div class="t dl" style="left:485px;top:326px;font-size:11.3px">Собственный Этаж:</div>
<div class="a" style="left:485px;top:340px;width:190px;height:22px;background:#f0f0f0;border:1px solid #d6d6d6"></div>
<div class="a" style="left:656px;top:341px;width:18px;height:20px;background:#fff"></div>
<div class="t" style="left:492px;top:346px;font-size:11.45px;color:#a0a0a0">Гибкий (Согласно Отметке)</div>
<svg style="left:661px;top:348px" width="10" height="6"><path d="M0.5 0.5L5 5L9.5 0.5" stroke="#bbb" stroke-width="1" fill="none"/></svg>
<div class="t dl" style="left:544px;top:400px;font-size:11.5px">отн. Проектный Нуль</div>
<div class="a" style="left:661px;top:399px;width:13px;height:13px;background:#e1e1e1;border:1px solid #c6c6c6"></div>
<svg style="left:665px;top:402px" width="5" height="8"><path d="M0 0V8L5 4Z" fill="#222"/></svg>
<svg style="left:486px;top:418px" width="85" height="27"><path d="M0.5 10H68.5L83.5 25.5H15.5Z" fill="#d3d3d3"/><path d="M29 14H45L49 20.5H33Z" fill="#9b9b9b"/><path d="M50 19.5H64" stroke="#333" stroke-width="1" stroke-dasharray="1.6 1.2"/><path d="M64.5 0.5V16" stroke="#222" stroke-width="1.1" stroke-dasharray="2 1.3"/><path d="M62 15.5L64.5 19.5L67 15.5Z" fill="#222"/></svg>
<div class="a" style="left:585px;top:420px;width:90px;height:23px;background:#fff;border:1px solid #7f7f7f"></div>
<div class="t" style="left:589px;top:426px;font-size:11.4px;color:#111">0</div>

<!-- right column of section 1 -->
<svg style="left:804px;top:145px" width="28" height="17"><rect x="3.5" y="2.5" width="12" height="12" fill="none" stroke="#222" stroke-width="1.1"/><path d="M0.5 8.5H3.5M15.5 8.5H18.5M9.5 0V2.5M9.5 14.5V17" stroke="#222" stroke-width="1"/><path d="M4 8.5H15M9.5 3V14" stroke="#444" stroke-width="0.8" stroke-dasharray="1 1.2"/><path d="M16 2.5H21M16 14.5H21M21 2.5V14.5" stroke="#333" stroke-width="1" stroke-dasharray="1.5 1"/><path d="M24.5 2.5V14.5 M22.8 4.5L24.5 2.5L26.2 4.5M22.8 12.5L24.5 14.5L26.2 12.5" stroke="#222" stroke-width="1.1" fill="none"/></svg>
<div class="a" style="left:834px;top:142px;width:65px;height:23px;background:#fff;border:1px solid #7f7f7f"></div>
<div class="t" style="left:838px;top:148px;font-size:11.4px;color:#111">300</div>
<svg style="left:804px;top:169px" width="20" height="24"><rect x="3.5" y="2.5" width="12" height="12" fill="none" stroke="#222" stroke-width="1.1"/><path d="M0.5 8.5H3.5M15.5 8.5H18.5M9.5 0V2.5M9.5 14.5V17" stroke="#222" stroke-width="1"/><path d="M4 8.5H15M9.5 3V14" stroke="#444" stroke-width="0.8" stroke-dasharray="1 1.2"/><path d="M3.5 15V19M15.5 15V19" stroke="#333" stroke-width="1" stroke-dasharray="1.5 1"/><path d="M3.5 21H15.5 M5.5 19.3L3.5 21L5.5 22.7M13.5 19.3L15.5 21L13.5 22.7" stroke="#222" stroke-width="1.1" fill="none"/></svg>
<div class="a" style="left:834px;top:170px;width:65px;height:23px;background:#fff;border:1px solid #7f7f7f"></div>
<div class="t" style="left:838px;top:176px;font-size:11.4px;color:#111">300</div>
<div class="a" style="left:905px;top:143px;width:18px;height:49px;background:#c9e0f7;border:1px solid #2c6fb0"></div>
<svg style="left:907px;top:148px" width="14" height="40"><path d="M2 6V3H7 M7 34H2V31" stroke="#222" stroke-width="1.4" fill="none"/><rect x="4.5" y="9" width="5" height="12" rx="2.5" fill="none" stroke="#333" stroke-width="1.1"/><rect x="4.5" y="17" width="5" height="12" rx="2.5" fill="none" stroke="#333" stroke-width="1.1"/></svg>
<div class="a" style="left:693px;top:169px;width:27px;height:24px;background:#c6dff6"></div>
<svg style="left:695px;top:171px" width="75" height="20"><rect x="3.5" y="3.5" width="13" height="13" fill="none" stroke="#222" stroke-width="1.2"/><path d="M0 10H3.5M16.5 10H20M10 0V3.5M10 16.5V20" stroke="#222" stroke-width="1.1"/><path d="M4 10H16M10 4V16" stroke="#444" stroke-width="0.8" stroke-dasharray="1 1.2"/><circle cx="37" cy="10" r="7" fill="none" stroke="#222" stroke-width="1.2"/><path d="M27.5 10H31M43 10H46.5M37 0.5V4M37 16V19.5" stroke="#222" stroke-width="1.1"/><path d="M31 10H43M37 4V16" stroke="#444" stroke-width="0.8" stroke-dasharray="1 1.2"/><path d="M54.5 2.5H71.5V6H65.5V14H71.5V17.5H54.5V14H60.5V6H54.5Z" stroke="#222" stroke-width="1.2" fill="none"/><path d="M51.5 10H74.5M63 0V3M63 17V20" stroke="#222" stroke-width="0.9"/></svg>
<div class="a" style="left:694px;top:210px;width:229px;height:24px;background:#e1e1e1;border:1px solid #c9c9c9"></div>
<svg style="left:697px;top:213px" width="24" height="18"><rect x="1" y="1" width="9.5" height="16" rx="2" fill="#e9e3b8" stroke="#222" stroke-width="1.1"/><rect x="12.5" y="1" width="9.5" height="16" rx="2" fill="#9f9f9f" stroke="#222" stroke-width="1.1"/></svg>
<div class="t" style="left:724px;top:217px;font-size:10.5px;color:#111">ОБЩИЙ - КОНСТРУКТИВНЫЙ</div>
<svg style="left:914px;top:217px" width="5" height="9"><path d="M0 0V9L5 4.5Z" fill="#222"/></svg>
<div class="a" style="left:693px;top:243px;width:230px;height:1px;background:#b2b2b2"></div>
<div class="a" style="left:694px;top:254px;width:36px;height:23px;background:#e1e1e1;border:1px solid #c9c9c9"></div>
<svg style="left:701px;top:256px" width="22" height="20"><rect x="3.5" y="3.5" width="13" height="13" fill="none" stroke="#222" stroke-width="1.2" stroke-dasharray="2 0.8"/><rect x="6" y="6" width="8" height="8" fill="none" stroke="#222" stroke-width="1.1"/><path d="M0 10H3.5M16.5 10H20M10 0V3.5M10 16.5V20" stroke="#222" stroke-width="1.1"/><path d="M6.5 10H13.5M10 6.5V13.5" stroke="#444" stroke-width="0.7" stroke-dasharray="1 1"/></svg>
<div class="a" style="left:735px;top:254px;width:33px;height:23px;background:#d5d5d5"></div>
<svg style="left:739px;top:258px" width="26" height="15"><rect x="3" y="1" width="7" height="13" fill="none" stroke="#a9a9a9" stroke-width="1"/><path d="M4 10L9 4M4 13L9 7" stroke="#b5b5b5" stroke-width="0.8"/><path d="M21 4V11L25 7.5Z" fill="#b0b0b0"/></svg>
<svg style="left:802px;top:254px" width="32" height="23"><rect x="4.5" y="6.5" width="14" height="14" fill="none" stroke="#aaa" stroke-width="1.1"/><rect x="7.5" y="9.5" width="8" height="8" fill="none" stroke="#aaa" stroke-width="1"/><path d="M1 13.5H4.5M18.5 13.5H22M11.5 3V6.5M11.5 20.5V23" stroke="#aaa" stroke-width="1"/><path d="M8 13.5H15M11.5 10V17" stroke="#bbb" stroke-width="0.7" stroke-dasharray="1 1"/><path d="M21 6H25M21 9H25 M27 3V5 M26 4H28M27 8V10M26 9H28" stroke="#aaa" stroke-width="1" stroke-dasharray="1.5 1"/></svg>
<div class="a" style="left:834px;top:254px;width:90px;height:23px;background:#f0f0f0;border:1px solid #d4d4d4"></div>
<div class="t" style="left:838px;top:260px;font-size:11.4px;color:#999">0</div>
<div class="a" style="left:694px;top:294px;width:229px;height:24px;background:#d4d4d4"></div>
<svg style="left:697px;top:297px" width="24" height="18"><rect x="1" y="1" width="9.5" height="16" fill="#e6e6e6" stroke="#aaa" stroke-width="1"/><path d="M1 6L6 1M1 11L10.5 2M1 16L10.5 7M5 17L10.5 12" stroke="#aaa" stroke-width="0.8"/><rect x="12.5" y="1" width="9.5" height="16" fill="#f5f5f5" stroke="#aaa" stroke-width="1"/></svg>
<div class="t" style="left:724px;top:300px;font-size:11.4px;color:#9c9c9c">Огнеупорная Защита</div>
<svg style="left:914px;top:301px" width="5" height="9"><path d="M0 0V9L5 4.5Z" fill="#b3b3b3"/></svg>
<div class="a" style="left:693px;top:327px;width:230px;height:1px;background:#b2b2b2"></div>
<div class="a" style="left:693px;top:338px;width:27px;height:24px;background:#c6dff6"></div>
<svg style="left:696px;top:341px" width="50" height="18"><path d="M1 16.5H20 M6 16.5V2.5H15V16.5" stroke="#222" stroke-width="1.2" fill="none"/><path d="M28 16.5H46 M31 16.5L36 2.5H45L40 16.5" stroke="#222" stroke-width="1.2" fill="none"/></svg>
<svg style="left:804px;top:341px" width="25" height="19"><path d="M1 17L5 2H11L7 17Z" fill="none" stroke="#aaa" stroke-width="1"/><path d="M1 17.5H24" stroke="#aaa" stroke-width="0.8" stroke-dasharray="1.5 1"/><text x="12" y="15" font-size="10" font-family="Liberation Serif" font-style="italic" fill="#aaa">α</text></svg>
<div class="a" style="left:834px;top:339px;width:90px;height:23px;background:#f0f0f0;border:1px solid #d4d4d4"></div>
<div class="t" style="left:838px;top:345px;font-size:11.4px;color:#999">90,00°</div>
<div class="a" style="left:693px;top:371px;width:27px;height:24px;background:#c6dff6"></div>
<svg style="left:694px;top:374px" width="52" height="19"><path d="M1 7H7 M1 12H7 M19 7H25M19 12H25" stroke="#222" stroke-width="1"/><path d="M1 8.5L4 11M4 8.5L6 10.5M20 8.5L23 11M22 8.5L25 10.5" stroke="#333" stroke-width="0.7"/><rect x="7" y="4.5" width="12" height="10" fill="none" stroke="#222" stroke-width="1.2"/><path d="M28 6H33V2H46V6H51 M28 16.5H51 M28 6V16.5 M51 6V16.5 M33 6V12H46V6" stroke="#222" stroke-width="1.1" fill="none"/><path d="M35 5H44" stroke="#333" stroke-width="0.8" stroke-dasharray="1.5 1"/><path d="M29 15L33 13M34 16L40 13M41 16L46 13M47 16L50 14" stroke="#444" stroke-width="0.7"/></svg>
<svg style="left:794px;top:373px" width="32" height="22"><path d="M2 10L10 4L17 13L9 19Z" fill="none" stroke="#222" stroke-width="1.2"/><path d="M8 12Q10 10 12 12" stroke="#222" stroke-width="0.7" fill="none"/><path d="M13 9L22 4M14 12H29" stroke="#333" stroke-width="1" stroke-dasharray="1.6 1.1"/><text x="21" y="9" font-size="10" font-family="Liberation Serif" font-style="italic" fill="#222">α</text></svg>
<div class="a" style="left:834px;top:372px;width:90px;height:23px;background:#fff;border:1px solid #7f7f7f"></div>
<div class="t" style="left:838px;top:378px;font-size:11.4px;color:#111">0,00°</div>
<div class="t dl" style="left:693px;top:405px;font-size:11.48px">Точка Привязки Ядра:</div>
<div class="a" style="left:898px;top:418px;width:13px;height:12px;background:#c6dff6"></div>
<svg style="left:888px;top:409px" width="34" height="32"><rect x="2.5" y="2.5" width="28" height="26.5" fill="none" stroke="#333" stroke-width="1" stroke-dasharray="1.5 1.5"/><g fill="#222"><circle cx="2.5" cy="2.5" r="1.8"/><circle cx="16.5" cy="2.5" r="1.8"/><circle cx="30.5" cy="2.5" r="1.8"/><circle cx="2.5" cy="15.5" r="1.8"/><circle cx="16.5" cy="15.5" r="1.8"/><circle cx="30.5" cy="15.5" r="1.8"/><circle cx="2.5" cy="29" r="1.8"/><circle cx="16.5" cy="29" r="1.8"/><circle cx="30.5" cy="29" r="1.8"/></g></svg>

<!-- section headers 2,3 -->
<div class="a" style="left:479px;top:458px;width:446px;height:16px;background:#d6d6d6;border-radius:3px"></div>
<svg style="left:486px;top:460px" width="34" height="14"><path d="M1.5 2.5V10.5L5.5 6.5Z" fill="#b0b0b0"/><path d="M16 1.5H27M16 11.5H27M19 1.5V11.5M24 1.5V11.5 M14 6.5H29" stroke="#aaa" stroke-width="1" fill="none"/></svg>
<div class="t hd" style="left:525px;top:460px;font-size:11.05px;color:#8a8a8a">МОДИФИКАТОРЫ СМЕЩЕНИЯ ПРОФИЛЯ</div>
<div class="a" style="left:479px;top:478px;width:446px;height:22px;background:#d6d6d6;border-radius:3px"></div>
<svg style="left:484px;top:479px" width="36" height="20"><path d="M1.5 7.5H8.5L5 11.5Z" fill="#333"/><rect x="19" y="3.5" width="12" height="12" fill="none" stroke="#222" stroke-width="1.1"/><rect x="22" y="6.5" width="6" height="6" fill="none" stroke="#222" stroke-width="1"/><path d="M17 9.5H33M25 1.5V17.5" stroke="#222" stroke-width="0.8"/></svg>
<div class="t hd" style="left:525px;top:484px;font-size:10.55px">ОТОБРАЖЕНИЕ НА ПЛАНЕ И В РАЗРЕЗЕ</div>
<!-- tree -->
<div class="a" style="left:479px;top:504px;width:428px;height:131px;background:#f0f0f0;overflow:hidden">
  <div class="a" style="left:0;top:22px;width:428px;height:59px;background:#fff"></div>
  <div class="a" style="left:0;top:41px;width:428px;height:1px;background:#ebebeb"></div>
  <div class="a" style="left:0;top:61px;width:428px;height:1px;background:#ebebeb"></div>
  <div class="a" style="left:0;top:101px;width:428px;height:30px;background:#fff"></div>
  <div class="a" style="left:0;top:121px;width:428px;height:1px;background:#ebebeb"></div>
</div>
<svg style="left:486px;top:512px" width="10" height="90"><path d="M0.5 0.5H8.5L4.5 4.5Z M0.5 80.5H8.5L4.5 84.5Z" fill="#333"/></svg>
<div class="t hd" style="left:541px;top:510px;font-size:10.72px">ПОКАЗ НА ПЛАНЕ ЭТАЖА</div>
<div class="t dl" style="left:542px;top:531px;font-size:11.28px">Показ на Этажах</div>
<div class="t dl" style="left:685px;top:531px;font-size:10.9px">Все Релевантные...</div>
<div class="t dl" style="left:542px;top:550px;font-size:11.28px">Показ на Плане Этажа</div>
<div class="t dl" style="left:685px;top:550px;font-size:10.9px">Сечение и Низ</div>
<div class="t dl" style="left:542px;top:570px;font-size:11.28px">Показ Проекции</div>
<div class="t dl" style="left:685px;top:570px;font-size:10.9px">Согласно Диапа...</div>
<svg style="left:870px;top:527px" width="17" height="56"><path d="M1.5 16V6L8 1.5L14.5 6V16 M0.5 10.5H15.5 M0.5 14.5H15.5 M6 8V16M10 8V16" stroke="#333" stroke-width="0.9" fill="none"/><path d="M1 25H15 M1 27.5H15" stroke="#555" stroke-width="0.8" stroke-dasharray="1.5 1"/><path d="M1 33L5 30H15L11 33Z M1 33V37H11V33 M11 37L15 34V30" stroke="#333" stroke-width="1" fill="none"/><path d="M1.5 55V46L8 41.5L14.5 46 M0.5 49.5H10 M0.5 53H10 M5 47V55 M11 48L15 51L11 54Z" stroke="#333" stroke-width="0.9" fill="none"/><path d="M11 48L15 51L11 54Z" fill="#222"/></svg>
<div class="t hd" style="left:541px;top:590px;font-size:10.72px">ПОВЕРХНОСТИ СЕЧЕНИЯ</div>
<svg style="left:505px;top:607px" width="28" height="30"><rect x="0.5" y="0.5" width="13" height="13" fill="none" stroke="#333" stroke-width="1" stroke-dasharray="2 1"/><path d="M4 3.5H10M4 10.5H10M7 3.5V10.5" stroke="#222" stroke-width="1"/><path d="M17 13L26 4" stroke="#222" stroke-width="1"/><rect x="0.5" y="20.5" width="13" height="13" fill="none" stroke="#333" stroke-width="1" stroke-dasharray="2 1"/><path d="M4 23.5H10M7 23.5V30" stroke="#222" stroke-width="1"/><path d="M20 20V30M25 20V30" stroke="#222" stroke-width="1"/></svg>
<div class="t dl" style="left:542px;top:611px;font-size:11.28px">Линии Ядра</div>
<div class="t dl" style="left:685px;top:611px;font-size:10.9px">Сплошная линия</div>
<div class="a" style="left:789px;top:616px;width:96px;height:1px;background:#111"></div>
<div class="a" style="left:479px;top:626px;width:428px;height:9px;overflow:hidden">
  <div class="t dl" style="left:63px;top:5px;font-size:11.28px">Перо Линии Ядра</div>
  <div class="t dl" style="left:206px;top:5px;font-size:10.9px">0,20 мм</div>
  <div class="t dl" style="left:309px;top:5px;font-size:10.9px">20</div>
  <div class="a" style="left:360px;top:2px;width:46px;height:14px;border:1px solid #222;background:#fff"></div>
  <div class="a" style="left:364px;top:5px;width:3px;height:8px;background:#8e1c1c"></div>
  <div class="a" style="left:370px;top:5px;width:32px;height:8px;background:#8e1c1c"></div>
</div>
<div class="a" style="left:907px;top:504px;width:17px;height:131px;background:#f0f0f0"></div>
<div class="a" style="left:908px;top:523px;width:14px;height:36px;background:#cdcdcd"></div>
<svg style="left:911px;top:512px" width="10" height="118"><path d="M1 5L5 1L9 5 M1 113L5 117L9 113" stroke="#333" stroke-width="1.2" fill="none"/></svg>
<!-- model section -->
<div class="a" style="left:479px;top:645px;width:446px;height:21px;background:#d6d6d6;border-radius:3px"></div>
<svg style="left:484px;top:646px" width="36" height="20"><path d="M1.5 7.5H8.5L5 11.5Z" fill="#333"/><path d="M22 3.5V16.5L25 18.5V5.5Z M22 3.5L25 1.5H29L25 3.5 M29 1.5V14.5L25 18.5" fill="none" stroke="#222" stroke-width="1"/><path d="M26 8H28M26 11H28" stroke="#222" stroke-width="0.8"/></svg>
<div class="t hd" style="left:525px;top:651px;font-size:10.96px">МОДЕЛЬ</div>
<div class="t dl" style="left:486px;top:675px;font-size:11.48px">Замена Покрытия:</div>
<div class="a" style="left:483px;top:694px;width:30px;height:25px;background:#e1e1e1;border:1px solid #c6c6c6"></div>
<svg style="left:491px;top:698px" width="16" height="18"><path d="M9.5 1.5V6 M7 6H12V9H7Z M6 9H12.5V15Q9 14 5 15.5Z M3 15.5H6" fill="none" stroke="#222" stroke-width="1.1" stroke-linejoin="round"/><path d="M9 6.5L11 2" stroke="#222" stroke-width="1"/></svg>
<div class="a" style="left:523px;top:694px;width:258px;height:25px;background:#d3d3d3;border:1px solid #cccccc"></div>
<div class="a" style="left:527px;top:698px;width:17px;height:17px;background:repeating-conic-gradient(#3c3c3c 0 25%,#b8b8b8 0 50%) 0 0/2px 2px;border:1px solid #888"></div>
<div class="t" style="left:550px;top:702px;font-size:11.4px;color:#a2a2a2">Краска - Желтая Охра</div>
<svg style="left:772px;top:702px" width="5" height="9"><path d="M0 0V9L5 4.5Z" fill="#b3b3b3"/></svg>
<div class="t dl" style="left:480px;top:734px;font-size:11.25px;color:#8c8c8c">Специальная Привязка Текстуры:</div>
<div class="a" style="left:759px;top:730px;width:164px;height:18px;background:#d3d3d3;border:1px solid #cfcfcf"></div>
<div class="t" style="left:781px;top:734px;font-size:11.1px;color:#a2a2a2">Восстановить Текстуру</div>
<div class="a" style="left:480px;top:757px;width:443px;height:1px;background:#b2b2b2"></div>
<div class="t dl" style="left:480px;top:772px;font-size:11.57px">Отношение к Зонам:</div>
<div class="a" style="left:702px;top:767px;width:222px;height:24px;background:#fff;border:1px solid #8a8a8a"></div>
<div class="t dl" style="left:709px;top:774px;font-size:11.4px">Граница Зоны</div>
<svg style="left:909px;top:776px" width="10" height="6"><path d="M0.5 0.5L5 5L9.5 0.5" stroke="#444" stroke-width="1" fill="none"/></svg>
<div class="a" style="left:479px;top:806px;width:446px;height:16px;background:#d6d6d6;border-radius:3px"></div>
<svg style="left:486px;top:806px" width="34" height="17"><path d="M1.5 3.5V11.5L5.5 7.5Z" fill="#333"/><path d="M18.5 1.5H26L29.5 4.5V15.5H18.5Z M21 5.5H26M21 8H27M21 10.5H27M21 13H27" fill="none" stroke="#222" stroke-width="1"/></svg>
<div class="t hd" style="left:525px;top:809px;font-size:10.99px">КЛАССИФИКАЦИЯ И СВОЙСТВА</div>
<div class="a" style="left:475px;top:824px;width:453px;height:1px;background:#9a9a9a"></div>
<!-- footer -->
<svg style="left:477px;top:832px" width="26" height="16"><path d="M6 1.5H24L20 7.5H2Z" fill="#f0f0f0" stroke="#111" stroke-width="1.3"/><path d="M2 10.5H20L24 4.5 M2 13H20L24 7 M2 15.5H20L24 9.5" fill="none" stroke="#111" stroke-width="1.3"/><path d="M9 5.5L13 3M13 5.5L18 3" stroke="#111" stroke-width="1"/></svg>
<div class="a" style="left:512px;top:831px;width:198px;height:18px;background:#e1e1e1;border:1px solid #c3c3c3"></div>
<svg style="left:518px;top:834px" width="17" height="11"><path d="M1 5.5Q8.5 -2.5 16 5.5Q8.5 13.5 1 5.5Z" fill="none" stroke="#333" stroke-width="1.1"/><circle cx="8.5" cy="5.5" r="2.3" fill="none" stroke="#333" stroke-width="1.1"/></svg>
<div class="t dl" style="left:536px;top:835px;font-size:11.5px">Конструктив - Колонны</div>
<svg style="left:702px;top:835px" width="5" height="9"><path d="M0 0V9L5 4.5Z" fill="#222"/></svg>
<div class="a" style="left:736px;top:831px;width:83px;height:22px;background:#e1e1e1;border:1px solid #adadad"></div>
<div class="t dl" style="left:751px;top:837px;font-size:11.5px">Отменить</div>
<div class="a" style="left:837px;top:831px;width:83px;height:22px;background:#e1e1e1;border:2px solid #1d5f9c"></div>
<div class="t dl" style="left:870px;top:837px;font-size:11.5px">OK</div>
<svg style="left:928px;top:851px" width="8" height="8"><g fill="#b5b5b5"><rect x="5" y="0" width="1.5" height="1.5"/><rect x="2.5" y="3" width="1.5" height="1.5"/><rect x="5" y="3" width="1.5" height="1.5"/><rect x="0" y="6" width="1.5" height="1.5"/><rect x="2.5" y="6" width="1.5" height="1.5"/><rect x="5" y="6" width="1.5" height="1.5"/></g></svg>

</body></html>
